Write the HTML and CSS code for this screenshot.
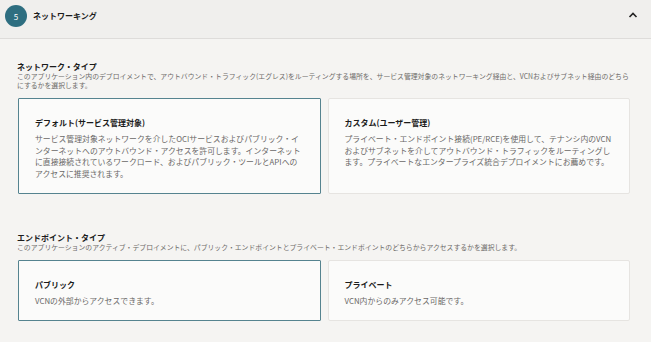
FILE: index.html
```html
<!DOCTYPE html>
<html lang="ja">
<head>
  <meta charset="UTF-8">
  <title>ネットワーキング</title>
  <link rel="stylesheet" href="styles.css">
</head>
<body>
  <div class="stepHeader">
    <span class="stepNumber">5</span>
    <span class="stepTitle">ネットワーキング</span>
    <svg class="chevron" width="10" height="8" viewBox="0 0 10 8">
      <polyline points="1.5,6 5,2.5 8.5,6" fill="none" stroke="#222" stroke-width="1.6"/>
    </svg>
  </div>

  <div class="stepBody">
    <div class="section">
      <h3 class="sectionTitle">ネットワーク・タイプ</h3>
      <p class="sectionDesc">このアプリケーション内のデプロイメントで、アウトバウンド・トラフィック(エグレス)をルーティングする場所を、サービス管理対象のネットワーキング経由と、VCNおよびサブネット経由のどちらにするかを選択します。</p>
      <div class="cardGroup">
        <div class="card selected">
          <div class="cardTitle">デフォルト(サービス管理対象)</div>
          <div class="cardText">サービス管理対象ネットワークを介したOCIサービスおよびパブリック・インターネットへのアウトバウンド・アクセスを許可します。インターネットに直接接続されているワークロード、およびパブリック・ツールとAPIへのアクセスに推奨されます。</div>
        </div>
        <div class="card">
          <div class="cardTitle">カスタム(ユーザー管理)</div>
          <div class="cardText">プライベート・エンドポイント接続(PE/RCE)を使用して、テナンシ内のVCNおよびサブネットを介してアウトバウンド・トラフィックをルーティングします。プライベートなエンタープライズ統合デプロイメントにお薦めです。</div>
        </div>
      </div>
    </div>

    <div class="section">
      <h3 class="sectionTitle">エンドポイント・タイプ</h3>
      <p class="sectionDesc">このアプリケーションのアクティブ・デプロイメントに、パブリック・エンドポイントとプライベート・エンドポイントのどちらからアクセスするかを選択します。</p>
      <div class="cardGroup">
        <div class="card selected">
          <div class="cardTitle">パブリック</div>
          <div class="cardText">VCNの外部からアクセスできます。</div>
        </div>
        <div class="card">
          <div class="cardTitle">プライベート</div>
          <div class="cardText">VCN内からのみアクセス可能です。</div>
        </div>
      </div>
    </div>
  </div>
</body>
</html>
```

FILE: styles.css
```css
body {
  margin: 0;
  background-color: #f5f4f2;
  font-family: "Noto Sans CJK JP", "Noto Sans", sans-serif;
  color: #1b1b1b;
}

.stepHeader {
  display: flex;
  align-items: flex-start;
  height: 33px;
  padding: 5px 13px 0 5px;
  background-color: #f0efed;
  border-bottom: 1px solid #dedcda;
}

.stepNumber {
  width: 22px;
  height: 22px;
  border-radius: 50%;
  background-color: #2e6e80;
  color: #fff;
  font-size: 8px;
  display: flex;
  align-items: center;
  justify-content: center;
  margin-right: 6px;
}

.stepTitle {
  flex: 1;
  font-size: 8px;
  font-weight: bold;
  line-height: 22px;
}

.chevron {
  margin-top: 6px;
}

.stepBody {
  padding: 22px 21px 0 17px;
}

.section + .section {
  margin-top: 38px;
}

.sectionTitle {
  margin: 0;
  font-size: 8px;
  font-weight: bold;
  line-height: 11px;
}

.sectionDesc {
  margin: 0 0 8px 0;
  font-size: 6.85px;
  line-height: 9px;
  color: #6d6b69;
}

.cardGroup {
  display: grid;
  grid-template-columns: 1fr 1fr;
  gap: 7px;
  margin-left: 1px;
}

.card {
  background-color: #fbfbfa;
  border: 1px solid #e6e4e1;
  border-radius: 2px;
  padding: 18px 16px 13px 16px;
}

.card.selected {
  border: 1.5px solid #55838f;
  border-radius: 1px;
}

.cardTitle {
  font-size: 8px;
  font-weight: bold;
  line-height: 12px;
  margin-bottom: 4px;
}

.cardText {
  font-size: 7.85px;
  line-height: 11.7px;
  color: #6a6867;
}
```
